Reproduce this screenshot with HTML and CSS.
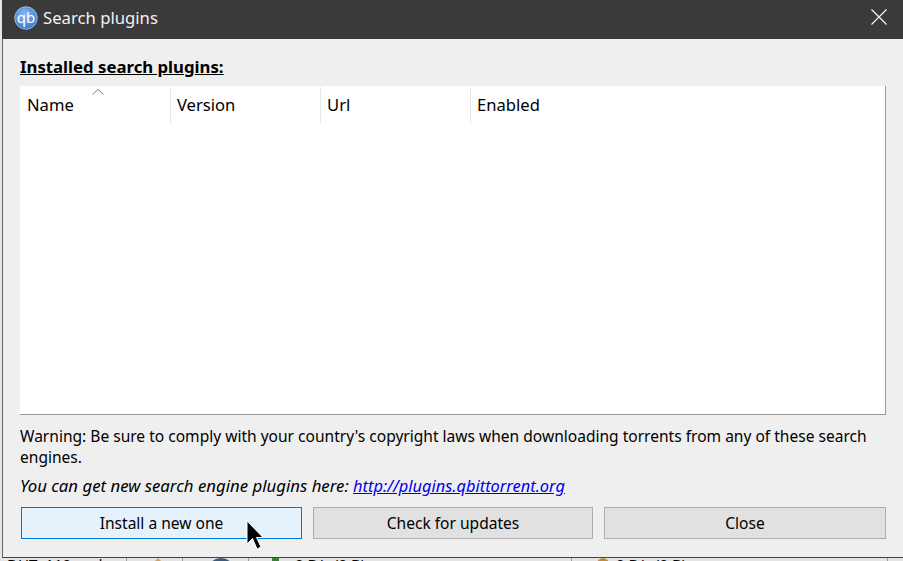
FILE: index.html
```html
<!DOCTYPE html>
<html lang="en">
<head>
<meta charset="utf-8">
<title>Search plugins</title>
<link rel="stylesheet" href="styles.css">
</head>
<body>
<div class="window">
  <header class="titlebar">
    <div class="title-left">
      <svg class="logo" width="24" height="24" viewBox="0 0 24 24">
        <defs>
          <radialGradient id="lg" cx="0.45" cy="0.35" r="0.75">
            <stop offset="0" stop-color="#8db9f2"/>
            <stop offset="1" stop-color="#2a6fd0"/>
          </radialGradient>
        </defs>
        <circle cx="12" cy="12" r="11.3" fill="url(#lg)" stroke="#a9c6ea" stroke-width="0.8"/>
        <text x="12" y="16.5" text-anchor="middle" class="logo-text">qb</text>
      </svg>
      <span class="title-text">Search plugins</span>
    </div>
    <svg class="close" width="16" height="16" viewBox="0 0 16 16">
      <path d="M0.5 0.5L15.5 15.5M15.5 0.5L0.5 15.5" stroke="#fff" stroke-width="1.1" fill="none"/>
    </svg>
  </header>
  <main class="content">
    <div class="heading">Installed search plugins:</div>
    <div class="table">
      <div class="thead">
        <div class="th th-name">Name<svg class="sort" width="12" height="6" viewBox="0 0 12 6"><path d="M0.5 5.5L6 0.5L11.5 5.5" stroke="#7a7a7a" fill="none"/></svg></div>
        <div class="th">Version</div>
        <div class="th">Url</div>
        <div class="th th-last">Enabled</div>
      </div>
    </div>
    <p class="warning">Warning: Be sure to comply with your country's copyright laws when downloading torrents from any of these search engines.</p>
    <p class="hint">You can get new search engine plugins here: <a href="#">http://plugins.qbittorrent.org</a></p>
    <div class="buttons">
      <div class="btn btn-hover">Install a new one</div>
      <div class="btn">Check for updates</div>
      <div class="btn">Close</div>
    </div>
  </main>
</div>
<div class="statusbar">
  <div class="cell cell-dht">DHT: 110 nodes</div>
  <div class="cell cell-a"><i class="tri"></i></div>
  <div class="cell cell-b"><i class="disc"></i></div>
  <div class="cell cell-c"><i class="block"></i><span>0 B/s (0 B)</span></div>
  <div class="cell cell-d"><i class="dot"></i><span>0 B/s (0 B)</span></div>
  <div class="cell cell-e"></div>
</div>
<svg class="cursor" width="18" height="30" viewBox="0 0 18 30">
  <path d="M1 1V24L6.5 18.5L11 29L15 27L10.5 17.5H17Z" fill="#000" stroke="#fff" stroke-width="1"/>
</svg>
</body>
</html>
```
FILE: styles.css
```css
* { box-sizing: border-box; }
html, body { margin: 0; padding: 0; }
body {
  position: relative;
  width: 903px;
  height: 561px;
  overflow: hidden;
  background: #e6e6e6;
  font-family: "Noto Sans", sans-serif;
  font-size: 15.56px;
  color: #000;
}
.window {
  height: 558px;
  margin-left: 2px;
  background: #efefef;
  border-left: 1px solid #666;
  border-bottom: 1px solid #444;
  display: flex;
  flex-direction: column;
}
.titlebar {
  height: 39px;
  margin-left: -1px;
  background: #3a3a3a;
  display: flex;
  align-items: center;
  justify-content: space-between;
  padding: 0 16px 0 12px;
  flex: none;
}
.title-left { display: flex; align-items: center; gap: 5px; margin-top: -4px; }
.logo-text { font: 15px "Noto Sans", sans-serif; fill: #fff; }
.title-text { color: #f2f2f2; font-size: 16.7px; }
.close { margin-top: -5px; }
.content {
  flex: 1;
  padding: 17px 17px 18px 17px;
  display: flex;
  flex-direction: column;
}
.heading {
  font-size: 16.75px;
  font-weight: 700;
  text-decoration: underline;
  line-height: 22px;
}
.table {
  height: 329px;
  margin-top: 8px;
  background: #fff;
  border-right: 1px solid #999;
  border-bottom: 1px solid #999;
}
.thead { display: flex; height: 37px; padding-top: 1px; }
.th {
  position: relative;
  width: 150px;
  padding: 7px 6px 0;
  border-right: 1px solid #e5e5e5;
  font-size: 16.6px;
  line-height: 22px;
}
.th-name { width: 151px; padding-left: 7px; }
.th-last { flex: 1; border-right: 0; }
.sort { position: absolute; left: 72px; top: 2px; }
.warning { margin: 11px 0 0; line-height: 21px; }
.hint { margin: 7px 0 0; font-size: 16.8px; line-height: 21px; font-style: italic; }
.hint a { color: #0000ee; font-size: 16.4px; text-decoration: underline; }
.buttons {
  display: grid;
  grid-template-columns: 281px 280px 282px;
  gap: 11px;
  margin-top: 11px;
  padding-left: 1px;
}
.btn {
  height: 32px;
  background: #e1e1e1;
  border: 1px solid #adadad;
  text-align: center;
  line-height: 31px;
}
.btn-hover { background: #e5f1fb; border-color: #0078d7; }
.statusbar {
  display: flex;
  height: 3px;
  overflow: hidden;
  background: #e4e4e4;
  font-size: 15px;
  line-height: 20px;
}
.cell {
  display: flex;
  flex: none;
  height: 3px;
  border-right: 1px solid #9a9a9a;
  white-space: nowrap;
}
.cell span { margin-top: -4px; }
.cell-dht { width: 127px; padding-left: 7px; line-height: 12px; }
.cell-a { width: 56px; padding-left: 26px; }
.cell-b { width: 66px; padding-left: 24px; }
.cell-c { width: 323px; padding-left: 23px; }
.cell-d { width: 316px; padding-left: 25px; }
.cell-e { width: 15px; border-right: 0; }
.tri {
  width: 0;
  height: 0;
  border-left: 5px solid transparent;
  border-right: 5px solid transparent;
  border-bottom: 5px solid #d6a15a;
}
.disc { width: 28px; height: 28px; border-radius: 50%; background: #3a5c7e; }
.block { width: 7px; height: 3px; margin-right: 16px; background: #3f7d3a; }
.dot { width: 12px; height: 12px; margin-right: 7px; border-radius: 50%; background: #c58a3c; }
.cursor { position: absolute; left: 246px; top: 520px; }
```
